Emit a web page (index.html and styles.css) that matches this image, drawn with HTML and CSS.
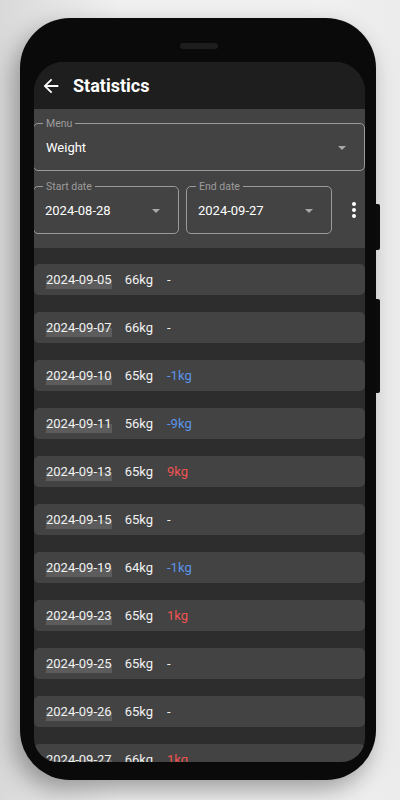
FILE: index.html
```html
<!doctype html>
<html>
<head>
    <title>Statistics</title>
    <link rel="stylesheet" href="styles.css">
</head>
<body>
<div class="phone">
    <div class="notch"></div>
    <span class="side-btn btn-power"></span>
    <span class="side-btn btn-volume"></span>

    <div class="screen">
        <div class="appbar">
            <svg class="back" width="22" height="22" viewBox="0 0 24 24">
                <path d="M20 11H7.83l5.59-5.59L12 4l-8 8 8 8 1.41-1.41L7.830 13H20v-2z" fill="#ffffff"/>
            </svg>
            <span class="title">Statistics</span>
        </div>

        <div class="filters">
            <div class="field field-menu">
                <span class="field-label">Menu</span>
                <span class="field-value">Weight</span>
                <span class="caret"></span>
            </div>
            <div class="date-row">
                <div class="field field-date">
                    <span class="field-label">Start date</span>
                    <span class="field-value">2024-08-28</span>
                    <span class="caret"></span>
                </div>
                <div class="field field-date">
                    <span class="field-label">End date</span>
                    <span class="field-value">2024-09-27</span>
                    <span class="caret"></span>
                </div>
                <div class="more">
                    <i></i><i></i><i></i>
                </div>
            </div>
        </div>

        <div class="list">
            <div class="row"><span class="date">2024-09-05</span><span class="kg">66kg</span><span class="diff">-</span></div>
            <div class="row"><span class="date">2024-09-07</span><span class="kg">66kg</span><span class="diff">-</span></div>
            <div class="row"><span class="date">2024-09-10</span><span class="kg">65kg</span><span class="diff down">-1kg</span></div>
            <div class="row"><span class="date">2024-09-11</span><span class="kg">56kg</span><span class="diff down">-9kg</span></div>
            <div class="row"><span class="date">2024-09-13</span><span class="kg">65kg</span><span class="diff up">9kg</span></div>
            <div class="row"><span class="date">2024-09-15</span><span class="kg">65kg</span><span class="diff">-</span></div>
            <div class="row"><span class="date">2024-09-19</span><span class="kg">64kg</span><span class="diff down">-1kg</span></div>
            <div class="row"><span class="date">2024-09-23</span><span class="kg">65kg</span><span class="diff up">1kg</span></div>
            <div class="row"><span class="date">2024-09-25</span><span class="kg">65kg</span><span class="diff">-</span></div>
            <div class="row"><span class="date">2024-09-26</span><span class="kg">65kg</span><span class="diff">-</span></div>
            <div class="row"><span class="date">2024-09-27</span><span class="kg">66kg</span><span class="diff up">1kg</span></div>
        </div>
    </div>
</div>
</body>
</html>
```

FILE: styles.css
```css
body {
    margin: 0;
    height: 800px;
    overflow: hidden;
    background: linear-gradient(90deg, #d9d9d9 0%, #f1f1f1 30%, #f1f1f1 80%, #ebebeb 100%);
    font-family: Roboto, "Noto Sans", sans-serif;
}

.phone {
    position: relative;
    box-sizing: border-box;
    width: 356px;
    height: 762px;
    margin: 18px 0 0 20px;
    padding: 25px 11px 0 14px;
    background: #0a0a0a;
    border-radius: 50px;
    box-shadow: -6px 10px 24px rgba(0, 0, 0, 0.35);
}

.notch {
    width: 38px;
    height: 6px;
    margin: 0 auto 13px 146px;
    background: #1e1e1e;
    border-radius: 3px;
}

.side-btn {
    position: absolute;
    right: -4px;
    width: 4px;
    background: #0c0c0c;
    border-radius: 0 2px 2px 0;
}

.btn-power {
    top: 186px;
    height: 46px;
}

.btn-volume {
    top: 281px;
    height: 94px;
}

.screen {
    width: 331px;
    height: 700px;
    overflow: hidden;
    border-radius: 30px 30px 24px 24px;
    background: #2d2d2d;
    color: #f2f2f2;
}

.appbar {
    height: 47px;
    display: flex;
    align-items: center;
    background: #1e1e1e;
    padding-left: 6px;
}

.back {
    display: block;
}

.title {
    margin-left: 11px;
    font-size: 18px;
    font-weight: 700;
    color: #ffffff;
}

.filters {
    background: #434343;
    padding: 14px 0 14px 0;
    margin-left: -1px;
}

.field {
    position: relative;
    box-sizing: border-box;
    height: 48px;
    display: flex;
    align-items: center;
    padding: 0 18px 0 12px;
    border: 1px solid #9a9a9a;
    border-radius: 5px;
}

.field-menu {
    margin-bottom: 15px;
}

.field-label {
    position: absolute;
    top: -7px;
    left: 9px;
    padding: 0 3px;
    background: #434343;
    color: #9c9c9c;
    font-size: 10.5px;
    line-height: 14px;
}

.field-value {
    flex: 1;
    font-size: 13px;
    color: #ffffff;
}

.caret {
    width: 0;
    height: 0;
    border-left: 4.5px solid transparent;
    border-right: 4.5px solid transparent;
    border-top: 4.5px solid #a8a8a8;
    margin-top: 1px;
}

.date-row {
    display: flex;
    align-items: center;
    gap: 7px;
}

.field-date {
    width: 146px;
    padding-left: 11px;
}

.more {
    display: flex;
    flex-direction: column;
    gap: 2px;
    margin-left: 13px;
}

.more i {
    width: 4px;
    height: 4px;
    border-radius: 50%;
    background: #ffffff;
}

.list {
    display: flex;
    flex-direction: column;
    gap: 17px;
    padding-top: 16px;
}

.row {
    height: 31px;
    flex-shrink: 0;
    display: flex;
    align-items: center;
    gap: 13px;
    padding-left: 12px;
    background: #434343;
    border-radius: 5px;
    font-size: 13px;
}

.kg {
    margin-right: 1px;
}

.date {
    background: linear-gradient(transparent 45%, #5c5c5c 45%);
    padding-bottom: 2px;
    margin-top: 2px;
}

.diff.down {
    color: #5b95ea;
}

.diff.up {
    color: #ef5350;
}
```
